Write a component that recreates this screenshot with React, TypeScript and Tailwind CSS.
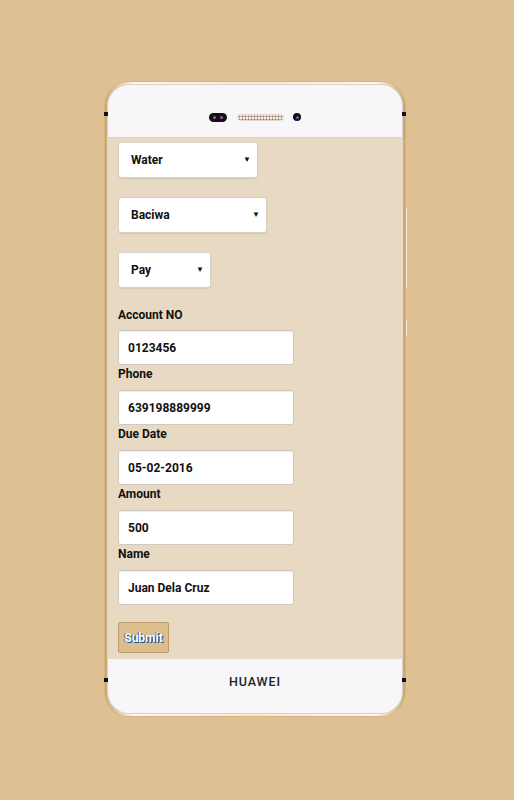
import React from "react";

function SelectBox({ value, w }: { value: string; w: string }) {
  return (
    <div
      className={`${w} h-[36px] bg-white rounded-[3px] border border-[#d6d0c6] shadow-[0_1px_1px_rgba(0,0,0,0.08)] flex items-center justify-between pl-[12px] pr-[6px]`}
    >
      <span className="text-[12px] font-bold text-[#111]">{value}</span>
      <span className="text-[8px] leading-none text-[#111]">▼</span>
    </div>
  );
}

function Field({ label, value, first }: { label: string; value: string; first?: boolean }) {
  return (
    <div className="flex flex-col">
      <div className={`text-[12px] font-bold text-[#111] leading-[18px] ${first ? "mb-[6px]" : "mb-[7px]"}`}>{label}</div>
      <div className="w-[176px] h-[35px] bg-white rounded-[3px] border border-[#cfc9bf] shadow-[inset_0_1px_1px_rgba(0,0,0,0.08)] flex items-center pl-[9px]">
        <span className="text-[12px] font-bold text-[#111]">{value}</span>
      </div>
    </div>
  );
}

export default function App() {
  return (
    <div
      className="w-[514px] h-[800px] bg-[#dfc093] pt-[82px] pl-[105px]"
      style={{ fontFamily: "Roboto, 'Noto Sans', sans-serif" }}
    >
      <div className="relative w-[300px] h-[634px] rounded-[24px] p-[2px] bg-[linear-gradient(90deg,#c9a670,#fffaf0_10%,#f3e8d2_50%,#fffaf0_90%,#c9a670)] shadow-[0_0_0_1px_rgba(190,160,110,0.35)]">
        <div className="w-full h-full rounded-[22px] overflow-hidden bg-[#f8f6f9] flex flex-col shadow-[inset_0_0_0_1px_rgba(170,140,100,0.35)]">
          {/* top bezel */}
          <div className="h-[54px] flex items-center justify-center border-b border-[#d8d2cc] shrink-0">
            <div className="flex items-center gap-[10px] mt-[13px]">
              <div className="w-[18px] h-[9px] rounded-full bg-[#111] flex items-center justify-center gap-[4px]">
                <div className="w-[3px] h-[3px] rounded-full bg-[#b04cc0]" />
                <div className="w-[3px] h-[3px] rounded-full bg-[#b04cc0]" />
              </div>
              <div className="w-[47px] h-[7px] rounded-full bg-[#f3eeea] border border-[#e2d8d0] bg-[radial-gradient(circle,#9a7565_0.9px,transparent_1.1px)] bg-[length:3px_3px]" />
              <div className="w-[8px] h-[8px] rounded-full bg-[#111] flex items-center justify-center ml-[-1px]">
                <div className="w-[3px] h-[3px] rounded-full bg-[#5a62d8]" />
              </div>
            </div>
          </div>
          {/* content */}
          <div className="h-[521px] bg-[#e8dac2] pl-[11px] pt-[4px] flex flex-col shrink-0">
            <div className="flex flex-col gap-[19px]">
              <SelectBox value="Water" w="w-[140px]" />
              <SelectBox value="Baciwa" w="w-[149px]" />
              <SelectBox value="Pay" w="w-[93px]" />
            </div>
            <div className="mt-[18px] flex flex-col">
              <Field label="Account NO" value="0123456" first />
              <Field label="Phone" value="639198889999" />
              <Field label="Due Date" value="05-02-2016" />
              <Field label="Amount" value="500" />
              <Field label="Name" value="Juan Dela Cruz" />
            </div>
            <div className="mt-[17px]">
              <button className="w-[51px] h-[31px] bg-[#dcbd8c] border border-[#b99a6a] rounded-[2px] text-[12px] font-bold text-white [text-shadow:1px_1px_0_#1c4f8a,-1px_0_0_#2a5f98]">
                Submit
              </button>
            </div>
          </div>
          {/* bottom bezel */}
          <div className="flex-1 flex justify-center pt-[15px]">
            <span className="text-[12.5px] leading-[16px] font-medium tracking-[0.9px] text-[#222]">HUAWEI</span>
          </div>
        </div>
        {/* side marks */}
        <div className="absolute left-[-1px] top-[30px] w-[4px] h-[4px] bg-[#111]" />
        <div className="absolute right-[-1px] top-[30px] w-[4px] h-[4px] bg-[#111]" />
        <div className="absolute left-[-1px] top-[596px] w-[4px] h-[4px] bg-[#111]" />
        <div className="absolute right-[-1px] top-[596px] w-[4px] h-[4px] bg-[#111]" />
        <div className="absolute right-[-2px] top-[126px] w-[2px] h-[80px] bg-[#f3ead8] border-l border-[#c9b08a]" />
        <div className="absolute right-[-2px] top-[238px] w-[2px] h-[16px] bg-[#f3ead8] border-l border-[#c9b08a]" />
      </div>
    </div>
  );
}
